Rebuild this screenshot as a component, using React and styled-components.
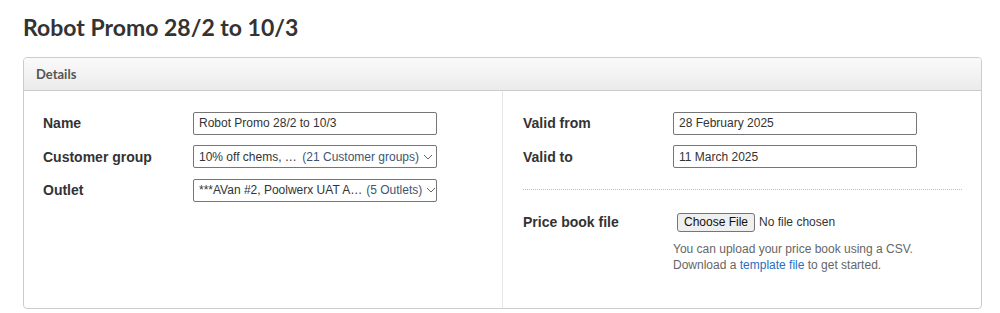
import React from 'react'
import styled, { createGlobalStyle } from 'styled-components'

const GlobalStyle = createGlobalStyle`
  body {
    margin: 0;
    background: #fff;
    font-family: "Liberation Sans", Arial, sans-serif;
    color: #333;
  }
`

const Page = styled.div`
  padding: 0 18px 0 23px;
`

const Title = styled.h1`
  font-family: Lato, "Liberation Sans", sans-serif;
  font-weight: 700;
  font-size: 23px;
  line-height: 1.2;
  color: #333;
  margin: 14px 0 15px;
`

const Panel = styled.section`
  border: 1px solid #ccc;
  border-radius: 4px;
  overflow: hidden;
`

const PanelHeader = styled.header`
  height: 32px;
  display: flex;
  align-items: center;
  padding: 0 12px;
  background: linear-gradient(to bottom, #fafafa, #ebebeb);
  border-bottom: 1px solid #ccc;
  font-family: Lato, "Liberation Sans", sans-serif;
  font-weight: 700;
  font-size: 13px;
  color: #555;
`

const PanelBody = styled.div`
  display: grid;
  grid-template-columns: 478px 1fr;
`

const Column = styled.div`
  padding: 21px ${p => (p.$right ? '19px' : '20px')} 35px ${p => (p.$right ? '20px' : '19px')};
  border-left: ${p => (p.$right ? '1px solid #e6e6e6' : 'none')};
  display: flex;
  flex-direction: column;
  gap: 10.5px;
`

const Row = styled.div`
  display: grid;
  grid-template-columns: 150px 244px;
  align-items: ${p => (p.$top ? 'start' : 'center')};
  min-height: 23px;
`

const Label = styled.label`
  font-weight: 700;
  font-size: 14px;
  color: #333;
  line-height: ${p => (p.$tall ? '19px' : 'normal')};
`

const TextInput = styled.input`
  box-sizing: border-box;
  width: 244px;
  height: 23px;
  border: 1px solid #767676;
  border-radius: 2px;
  padding: 0 5px;
  font-family: "Liberation Sans", Arial, sans-serif;
  font-size: 12px;
  color: #333;
  background: #fff;
  outline: none;
`

const SelectBox = styled.div`
  box-sizing: border-box;
  width: 244px;
  height: 23px;
  border: 1px solid #767676;
  border-radius: 2px;
  padding: 0 3px 0 5px;
  display: flex;
  align-items: center;
  font-size: 12px;
  color: #333;
  white-space: nowrap;
  overflow: hidden;
  cursor: pointer;
`

const SelectValue = styled.span`
  flex: none;
`

const SelectCount = styled.span`
  margin-left: auto;
  padding-left: 4px;
  color: #3d5573;
`

const ChevronIcon = styled.svg`
  flex: none;
  margin-left: 4px;
`

const Chevron = () => (
  <ChevronIcon width="10" height="6" viewBox="0 0 10 6" fill="none">
    <path d="M1 1l4 4 4-4" stroke="#666" strokeWidth="1" />
  </ChevronIcon>
)

const Divider = styled.hr`
  border: none;
  border-top: 1px dotted #bbb;
  margin: 10.5px 0 12px;
  height: 0;
`

const FileField = styled.div`
  display: flex;
  flex-direction: column;
`

const FileRow = styled.div`
  display: flex;
  align-items: center;
  gap: 4px;
  padding-left: 4px;
  height: 19px;
  font-size: 12px;
  color: #333;
`

const FileButton = styled.button`
  font-family: "Liberation Sans", Arial, sans-serif;
  font-size: 12px;
  color: #111;
  height: 19px;
  padding: 0 6px;
  background: #efefef;
  border: 1px solid #767676;
  border-radius: 3px;
`

const Help = styled.p`
  margin: 9px 0 0;
  font-size: 12px;
  line-height: 16px;
  color: #666;
  white-space: nowrap;
`

const Link = styled.a`
  color: #1f6fbf;
  text-decoration: none;
`

export default function App() {
  return (
    <Page>
      <GlobalStyle />
      <Title>Robot Promo 28/2 to 10/3</Title>
      <Panel>
        <PanelHeader>Details</PanelHeader>
        <PanelBody>
          <Column>
            <Row>
              <Label>Name</Label>
              <TextInput defaultValue="Robot Promo 28/2 to 10/3" />
            </Row>
            <Row>
              <Label>Customer group</Label>
              <SelectBox>
                <SelectValue>10% off chems, …</SelectValue>
                <SelectCount>(21 Customer groups)</SelectCount>
                <Chevron />
              </SelectBox>
            </Row>
            <Row>
              <Label>Outlet</Label>
              <SelectBox>
                <SelectValue>***AVan #2, Poolwerx UAT A…</SelectValue>
                <SelectCount>(5 Outlets)</SelectCount>
                <Chevron />
              </SelectBox>
            </Row>
          </Column>
          <Column $right>
            <Row>
              <Label>Valid from</Label>
              <TextInput defaultValue="28 February 2025" />
            </Row>
            <Row>
              <Label>Valid to</Label>
              <TextInput defaultValue="11 March 2025" />
            </Row>
            <Divider />
            <Row $top>
              <Label $tall>Price book file</Label>
              <FileField>
                <FileRow>
                  <FileButton type="button">Choose File</FileButton>
                  <span>No file chosen</span>
                </FileRow>
                <Help>
                  You can upload your price book using a CSV.
                  <br />
                  Download a <Link href="#">template file</Link> to get started.
                </Help>
              </FileField>
            </Row>
          </Column>
        </PanelBody>
      </Panel>
    </Page>
  )
}
